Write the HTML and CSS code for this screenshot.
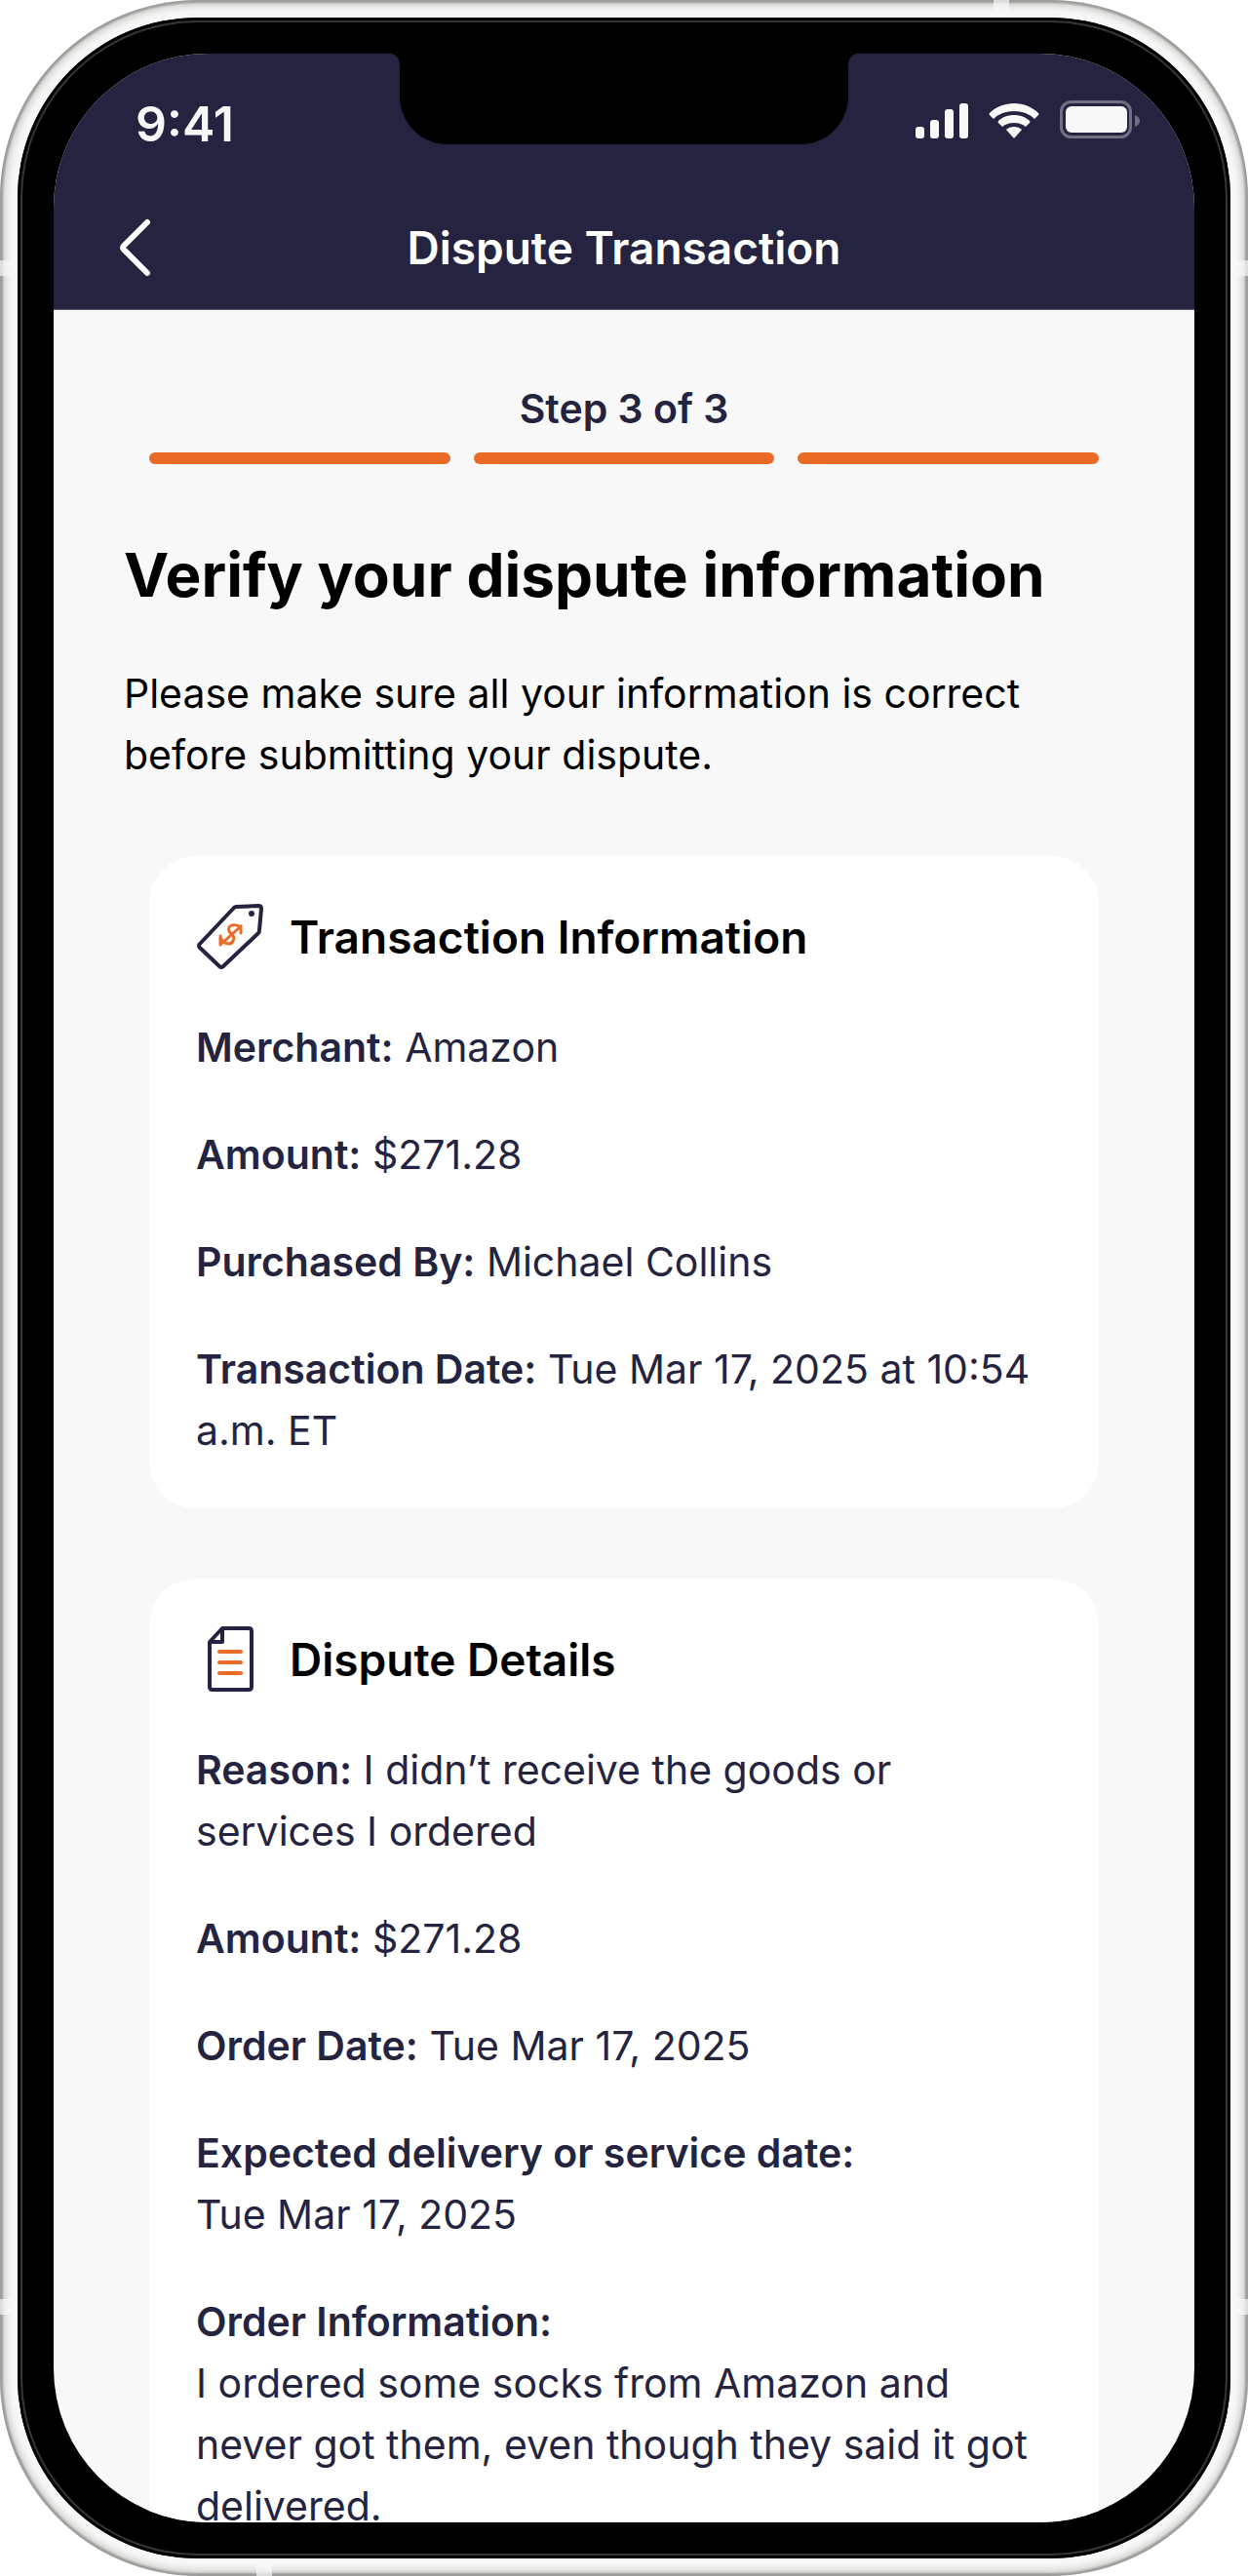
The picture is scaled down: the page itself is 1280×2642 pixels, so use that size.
FILE: index.html
```html
<!DOCTYPE html>
<html lang="en">
  <head>
    <meta charset="UTF-8" />
    <meta name="viewport" content="width=device-width, initial-scale=1.0" />
    <title>Dispute Transaction</title>
    <link rel="stylesheet" href="styles.css" />
  </head>
  <body>
    <div class="phone">
      <span class="band band-top"></span>
      <span class="band band-bottom"></span>
      <span class="band band-left upper"></span>
      <span class="band band-left lower"></span>
      <span class="band band-right upper"></span>
      <span class="band band-right lower"></span>

      <div class="bezel">
        <div class="screen">
          <header class="header">
            <!-- Notch -->
            <svg class="notch" width="476" height="93" viewBox="0 0 476 93" aria-hidden="true">
              <path d="M0 0Q8 2 8 14V44A49 49 0 0 0 57 93H419A49 49 0 0 0 468 44V14Q468 2 476 0Z" fill="#000" />
            </svg>

            <div class="status-bar">
              <span class="time">9:41</span>
              <div class="status-icons">
                <svg width="54" height="40" viewBox="0 0 54 40" fill="#f8f8f8" aria-hidden="true">
                  <rect x="0" y="27" width="9" height="12" rx="3" />
                  <rect x="15" y="20" width="9" height="19" rx="3" />
                  <rect x="30" y="9" width="9" height="30" rx="3" />
                  <rect x="45" y="3" width="9" height="36" rx="3" />
                </svg>
                <svg width="52" height="40" viewBox="0 0 52 40" fill="#f8f8f8" aria-hidden="true">
                  <path d="M26 3C16 3 7 7 1 13Q0 14 1 15L5 19Q13 11 26 11T47 19L51 15Q52 14 51 13C45 7 36 3 26 3Z" />
                  <path d="M26 15C20 15 14 17 10 21Q9 22 10 23L14 27Q19 23 26 23T38 27L42 23Q43 22 42 21C38 17 32 15 26 15Z" />
                  <path d="M26 27C23 27 20 28 18 30L25 38Q26 39 27 38L34 30C32 28 29 27 26 27Z" />
                </svg>
                <svg width="82" height="40" viewBox="0 0 82 40" aria-hidden="true">
                  <rect x="1.5" y="1.5" width="71" height="36" rx="10" fill="none" stroke="#716f83" stroke-width="3" />
                  <rect x="6" y="6" width="63" height="27" rx="6" fill="#f8f8f8" />
                  <path d="M77 15Q82 17 82 21T77 27Z" fill="#716f83" />
                </svg>
              </div>
            </div>

            <div class="nav-bar">
              <button type="button" class="back" aria-label="Back">
                <svg width="32" height="60" viewBox="0 0 32 60" aria-hidden="true">
                  <path d="M28 4L4 28Q2 30 4 32L28 56" fill="none" stroke="#fff" stroke-width="6" stroke-linecap="round" />
                </svg>
              </button>
              <h1 class="nav-title">Dispute Transaction</h1>
            </div>
          </header>

          <main class="content">
            <div class="progress">
              <p class="step">Step 3 of 3</p>
              <div class="bars">
                <span class="bar"></span>
                <span class="bar"></span>
                <span class="bar"></span>
              </div>
            </div>

            <h2 class="title">Verify your dispute information</h2>
            <p class="intro">Please make sure all your information is correct before submitting your dispute.</p>

            <section class="card">
              <div class="card-header">
                <svg class="icon" width="70" height="70" viewBox="0 0 70 70" fill="none" aria-hidden="true">
                  <path d="M41 4L64 3Q67 3 67 6L65 28Q65 30 64 31L28 65Q26 67 24 65L4 46Q2 44 4 42L39 5Q40 4 41 4Z" stroke="#242340" stroke-width="4" stroke-linejoin="round" />
                  <circle cx="57" cy="11" r="3" fill="#242340" />
                  <path d="M46 27C43 20 31 22 34 29C36 33 41 34 38 39C35 45 26 41 25 34M25 43L46 24M44 24H46V31M25 36V43" stroke="#ea6b28" stroke-width="3" stroke-linecap="round" />
                </svg>
                <h3>Transaction Information</h3>
              </div>
              <p><strong>Merchant:</strong> Amazon</p>
              <p><strong>Amount:</strong> $271.28</p>
              <p><strong>Purchased By:</strong> Michael Collins</p>
              <p><strong>Transaction Date:</strong> Tue Mar 17, 2025 at 10:54 a.m. ET</p>
            </section>

            <section class="card">
              <div class="card-header">
                <svg class="icon" width="70" height="70" viewBox="0 0 70 70" fill="none" aria-hidden="true">
                  <path d="M27 3H54Q57 3 57 6V63Q57 66 54 66H17Q14 66 14 63V17L27 3ZM14 17H27V3" stroke="#242340" stroke-width="4" stroke-linejoin="round" />
                  <path d="M24 27H46M24 38H46M24 49H46" stroke="#ea6b28" stroke-width="4" stroke-linecap="round" />
                </svg>
                <h3>Dispute Details</h3>
              </div>
              <p><strong>Reason:</strong> I didn’t receive the goods or services I ordered</p>
              <p><strong>Amount:</strong> $271.28</p>
              <p><strong>Order Date:</strong> Tue Mar 17, 2025</p>
              <p><strong>Expected delivery or service date:</strong><br />Tue Mar 17, 2025</p>
              <p><strong>Order Information:</strong><br />I ordered some socks from Amazon and never got them, even though they said it got delivered.</p>
            </section>
          </main>
        </div>
      </div>
    </div>
  </body>
</html>
```

FILE: styles.css
```css
* {
  box-sizing: border-box;
}

body {
  margin: 0;
  background: #fff;
  font-family: Inter, "Liberation Sans", sans-serif;
}

h1,
h2,
h3,
p {
  margin: 0;
}

/* Phone frame */
.phone {
  position: relative;
  height: 100vh;
  padding: 18px;
  border-radius: 203px;
  background: #f7f7f7;
  box-shadow: inset 0 0 2px 3px #9c9c9b, inset 0 0 6px 7px #d6d5d1;
}

.bezel {
  height: 100%;
  padding: 37px;
  border-radius: 185px;
  background: #000;
  box-shadow: inset 0 0 0 3px #000, inset 0 0 0 5px #363636;
}

.screen {
  position: relative;
  display: flex;
  flex-direction: column;
  height: 100%;
  overflow: hidden;
  border-radius: 158px;
  background: #f8f8f8;
}

.band {
  position: absolute;
  background: #f8f8f8;
  opacity: 0.7;
}

.band-top,
.band-bottom {
  width: 16px;
  height: 18px;
}

.band-left,
.band-right {
  width: 18px;
  height: 16px;
}

.band-top {
  top: 0;
  right: 245px;
}

.band-bottom {
  bottom: 0;
  left: 263px;
}

.band-left {
  left: 0;
}

.band-right {
  right: 0;
}

.upper {
  top: 267px;
}

.lower {
  bottom: 268px;
}

/* Header */
.header {
  flex: none;
  border-bottom: 1px solid #5c5b70;
  background: #242340;
  color: #fff;
}

.notch {
  position: absolute;
  top: 0;
  left: 50%;
  transform: translateX(-50%);
}

.status-bar {
  display: flex;
  align-items: center;
  justify-content: space-between;
  height: 136px;
  padding: 0 56px 0 84px;
  color: #f8f8f8;
}

.time {
  padding-top: 8px;
  font-size: 50px;
  font-weight: 600;
  line-height: 60px;
}

.status-icons {
  display: flex;
  gap: 21px;
}

.nav-bar {
  display: grid;
  grid-template-columns: 48px 1fr 48px;
  align-items: center;
  height: 126px;
  padding: 0 60px;
}

.back {
  padding: 0 8px;
  border: none;
  background: none;
  line-height: 0;
  cursor: pointer;
}

.nav-title {
  font-size: 46px;
  font-weight: 600;
  line-height: 60px;
  text-align: center;
}

/* Content */
.content {
  flex: 1;
  min-height: 0;
  padding: 70px 72px 48px;
  overflow-y: auto;
  scrollbar-width: none;
}

.progress {
  margin: 0 26px;
}

.step {
  color: #242340;
  font-size: 41px;
  font-weight: 600;
  line-height: 62px;
  text-align: center;
}

.bars {
  display: flex;
  gap: 24px;
  margin-top: 14px;
}

.bar {
  flex: 1;
  height: 12px;
  border-radius: 6px;
  background: #ea6b28;
}

.title {
  margin-top: 72px;
  font-size: 62px;
  font-weight: 700;
  line-height: 84px;
}

.intro {
  margin-top: 48px;
  font-size: 41px;
  line-height: 63px;
}

.card {
  display: flex;
  flex-direction: column;
  gap: 47px;
  margin: 72px 26px 0;
  padding: 48px;
  border-radius: 48px;
  background: #fff;
  color: #242340;
  font-size: 41px;
  line-height: 63px;
}

.card-header {
  display: flex;
  align-items: center;
  gap: 26px;
}

.card h3 {
  color: #000;
  font-size: 46px;
  font-weight: 600;
  line-height: 60px;
}

.card strong {
  font-weight: 600;
}
```
